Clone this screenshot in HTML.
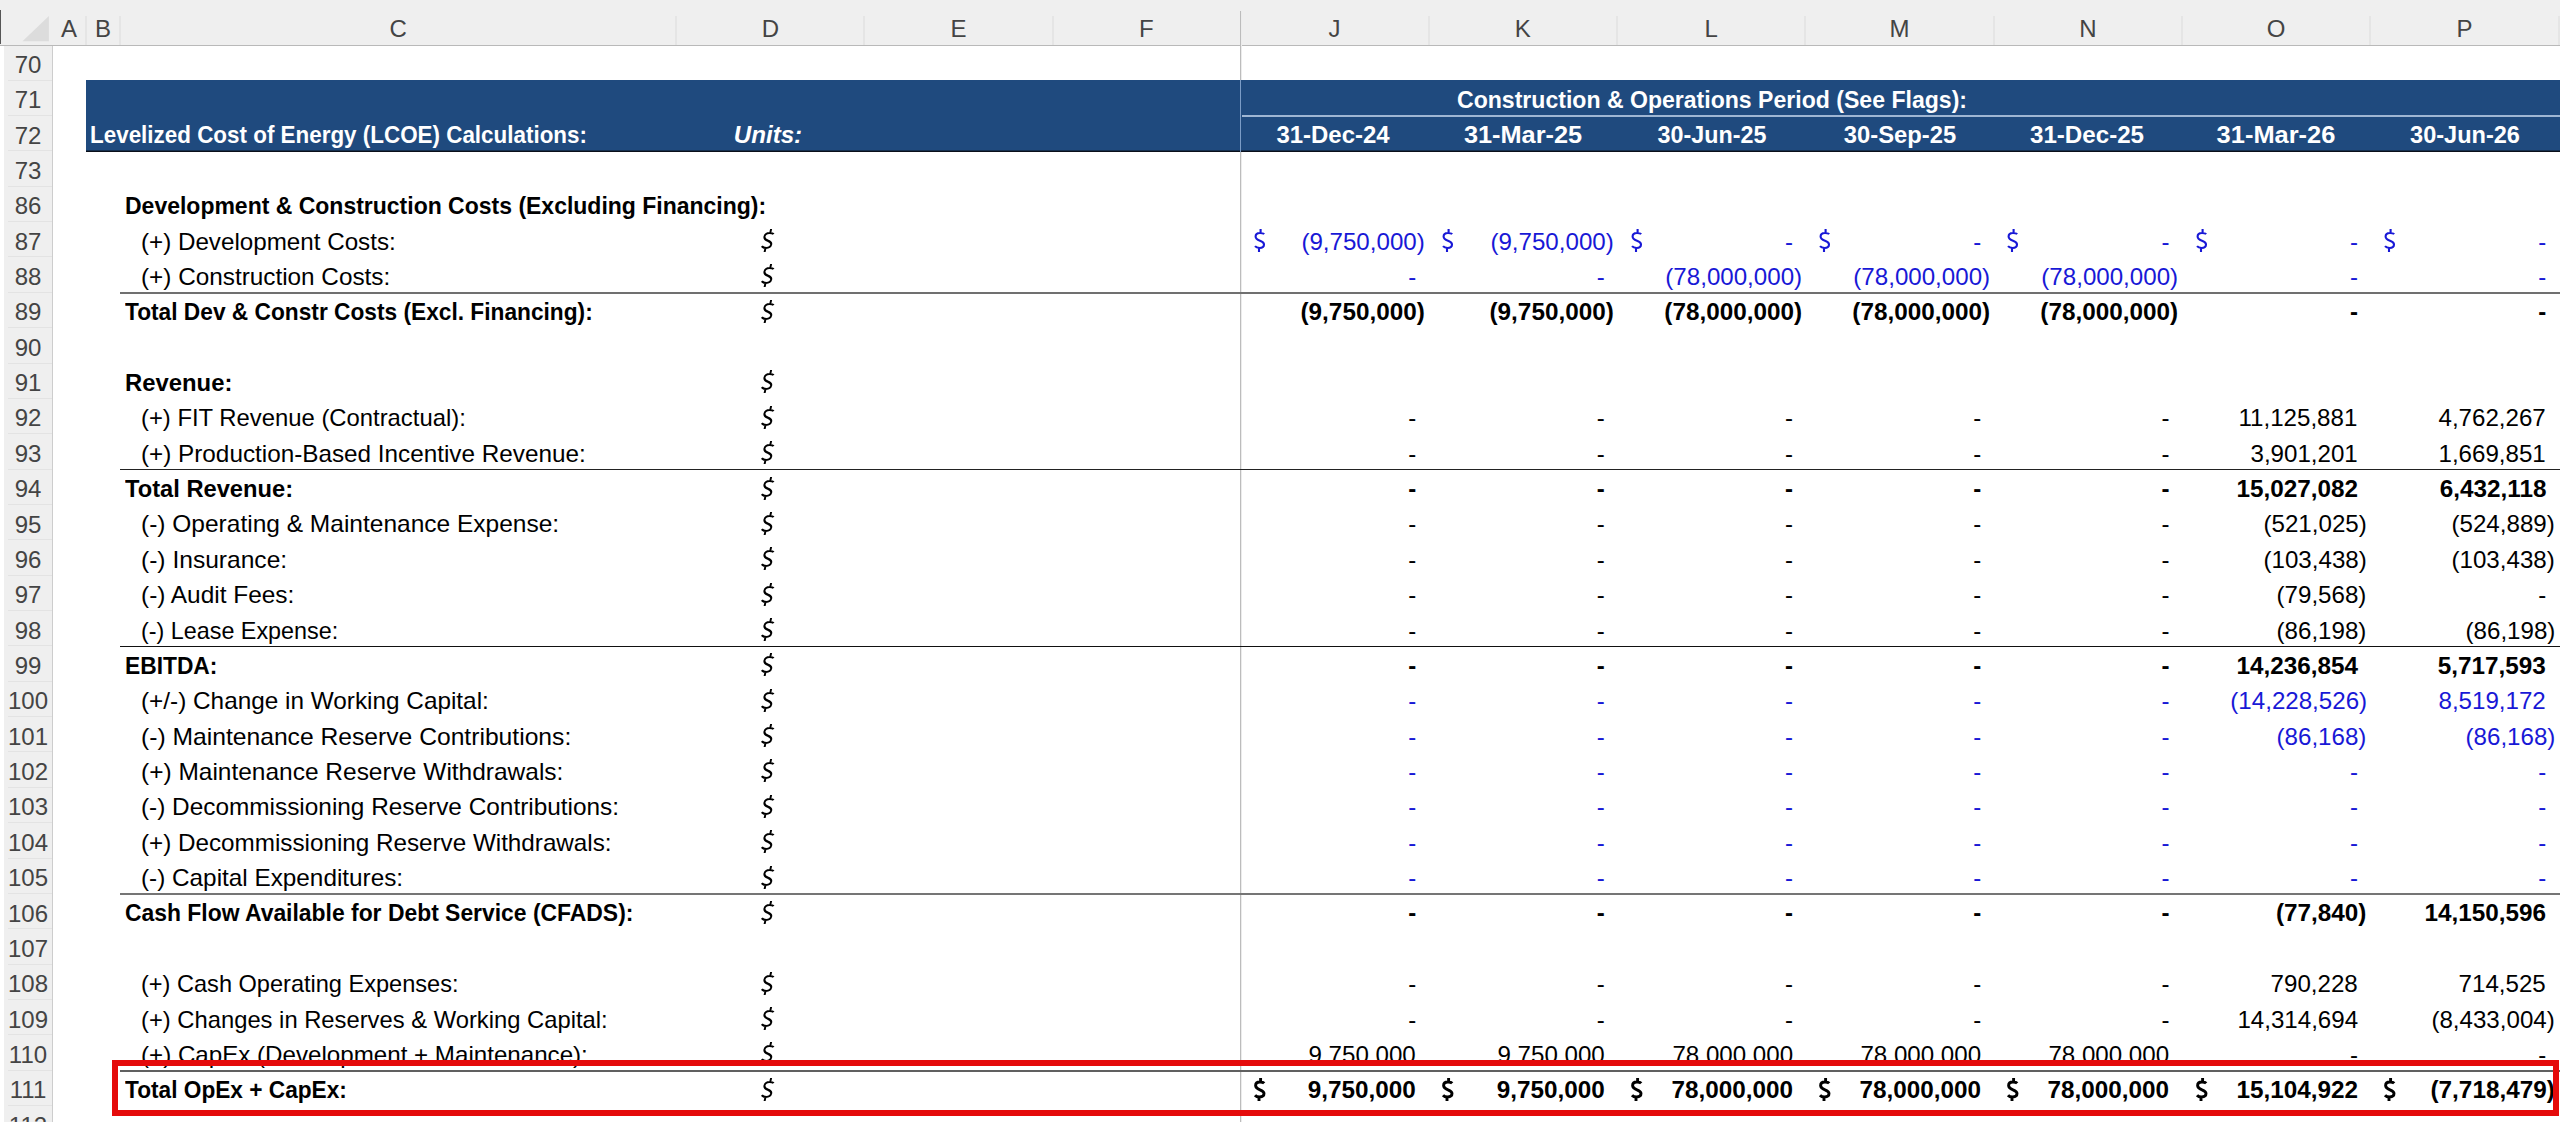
<!DOCTYPE html>
<html><head><meta charset="utf-8"><style>
html,body{margin:0;padding:0}
body{width:2560px;height:1122px;overflow:hidden;background:#fff;position:relative;font-family:"Liberation Sans",sans-serif;}
div{position:absolute}
.t{white-space:pre;line-height:30px;height:30px;font-size:24px}
.b{font-weight:bold}
.i{font-style:italic}
.bl{color:#1818d6}
.wh{color:#fff}
.hd{color:#444}
</style></head><body>
<svg width="0" height="0" style="position:absolute;left:0;top:0"><defs><g id="dS"><path d="M10.2,5.2 C9.2,4 7.7,4.05 5.8,4.05 C3.2,4.05 1.6,5.4 1.6,7.6 C1.6,10.2 3.8,11 6,11.8 C8.6,12.7 10,13.6 10,15.6 C10,17.8 8.2,18.95 5.6,18.95 C3.6,18.95 2,18.4 1,17.2 M6.6,0 L6.6,4.05 M5,18.95 L5,23" fill="none" stroke="currentColor"/></g></defs></svg>

<div style="left:0;top:0;width:2560px;height:45px;background:#efefef"></div>
<div style="left:0;top:45px;width:2560px;height:1px;background:#b9b9b9"></div>
<div style="left:4px;top:46px;width:48px;height:1076px;background:#efefef"></div>
<div style="left:52px;top:46px;width:1px;height:1076px;background:#cdcdcd"></div>
<div style="left:0;top:10px;width:1px;height:34px;background:#555"></div>
<svg style="position:absolute;left:0;top:0" width="60" height="45"><polygon points="22.5,41.2 48.9,16 48.9,41.2" fill="#dcdcdc"/></svg>
<div style="left:85px;top:16px;width:2px;height:29px;background:#e5e5e5"></div>
<div style="left:119px;top:16px;width:2px;height:29px;background:#e5e5e5"></div>
<div style="left:675px;top:16px;width:2px;height:29px;background:#e5e5e5"></div>
<div style="left:863px;top:16px;width:2px;height:29px;background:#e5e5e5"></div>
<div style="left:1052px;top:16px;width:2px;height:29px;background:#e5e5e5"></div>
<div style="left:1428px;top:16px;width:2px;height:29px;background:#e5e5e5"></div>
<div style="left:1616px;top:16px;width:2px;height:29px;background:#e5e5e5"></div>
<div style="left:1804px;top:16px;width:2px;height:29px;background:#e5e5e5"></div>
<div style="left:1993px;top:16px;width:2px;height:29px;background:#e5e5e5"></div>
<div style="left:2181px;top:16px;width:2px;height:29px;background:#e5e5e5"></div>
<div style="left:2369px;top:16px;width:2px;height:29px;background:#e5e5e5"></div>
<div style="left:2558px;top:16px;width:2px;height:29px;background:#e5e5e5"></div>
<div class="t hd" style="left:19.0px;width:100px;text-align:center;top:13.7px">A</div>
<div class="t hd" style="left:53.0px;width:100px;text-align:center;top:13.7px">B</div>
<div class="t hd" style="left:348.2px;width:100px;text-align:center;top:13.7px">C</div>
<div class="t hd" style="left:720.5px;width:100px;text-align:center;top:13.7px">D</div>
<div class="t hd" style="left:908.5px;width:100px;text-align:center;top:13.7px">E</div>
<div class="t hd" style="left:1096.4px;width:100px;text-align:center;top:13.7px">F</div>
<div class="t hd" style="left:1284.5px;width:100px;text-align:center;top:13.7px">J</div>
<div class="t hd" style="left:1472.8px;width:100px;text-align:center;top:13.7px">K</div>
<div class="t hd" style="left:1661.1px;width:100px;text-align:center;top:13.7px">L</div>
<div class="t hd" style="left:1849.5px;width:100px;text-align:center;top:13.7px">M</div>
<div class="t hd" style="left:2037.8px;width:100px;text-align:center;top:13.7px">N</div>
<div class="t hd" style="left:2226.1px;width:100px;text-align:center;top:13.7px">O</div>
<div class="t hd" style="left:2414.4px;width:100px;text-align:center;top:13.7px">P</div>
<div style="left:8px;top:80px;width:44px;height:1px;background:#e3e3e3"></div>
<div class="t hd" style="left:3px;width:50px;text-align:center;top:49.8px">70</div>
<div style="left:8px;top:115px;width:44px;height:1px;background:#e3e3e3"></div>
<div class="t hd" style="left:3px;width:50px;text-align:center;top:85.2px">71</div>
<div style="left:8px;top:150px;width:44px;height:1px;background:#e3e3e3"></div>
<div class="t hd" style="left:3px;width:50px;text-align:center;top:120.6px">72</div>
<div style="left:8px;top:186px;width:44px;height:1px;background:#e3e3e3"></div>
<div class="t hd" style="left:3px;width:50px;text-align:center;top:155.9px">73</div>
<div style="left:8px;top:221px;width:44px;height:1px;background:#e3e3e3"></div>
<div class="t hd" style="left:3px;width:50px;text-align:center;top:191.3px">86</div>
<div style="left:8px;top:256px;width:44px;height:1px;background:#e3e3e3"></div>
<div class="t hd" style="left:3px;width:50px;text-align:center;top:226.6px">87</div>
<div style="left:8px;top:292px;width:44px;height:1px;background:#e3e3e3"></div>
<div class="t hd" style="left:3px;width:50px;text-align:center;top:262.0px">88</div>
<div style="left:8px;top:327px;width:44px;height:1px;background:#e3e3e3"></div>
<div class="t hd" style="left:3px;width:50px;text-align:center;top:297.4px">89</div>
<div style="left:8px;top:363px;width:44px;height:1px;background:#e3e3e3"></div>
<div class="t hd" style="left:3px;width:50px;text-align:center;top:332.7px">90</div>
<div style="left:8px;top:398px;width:44px;height:1px;background:#e3e3e3"></div>
<div class="t hd" style="left:3px;width:50px;text-align:center;top:368.1px">91</div>
<div style="left:8px;top:433px;width:44px;height:1px;background:#e3e3e3"></div>
<div class="t hd" style="left:3px;width:50px;text-align:center;top:403.4px">92</div>
<div style="left:8px;top:469px;width:44px;height:1px;background:#e3e3e3"></div>
<div class="t hd" style="left:3px;width:50px;text-align:center;top:438.8px">93</div>
<div style="left:8px;top:504px;width:44px;height:1px;background:#e3e3e3"></div>
<div class="t hd" style="left:3px;width:50px;text-align:center;top:474.2px">94</div>
<div style="left:8px;top:539px;width:44px;height:1px;background:#e3e3e3"></div>
<div class="t hd" style="left:3px;width:50px;text-align:center;top:509.5px">95</div>
<div style="left:8px;top:575px;width:44px;height:1px;background:#e3e3e3"></div>
<div class="t hd" style="left:3px;width:50px;text-align:center;top:544.9px">96</div>
<div style="left:8px;top:610px;width:44px;height:1px;background:#e3e3e3"></div>
<div class="t hd" style="left:3px;width:50px;text-align:center;top:580.2px">97</div>
<div style="left:8px;top:645px;width:44px;height:1px;background:#e3e3e3"></div>
<div class="t hd" style="left:3px;width:50px;text-align:center;top:615.6px">98</div>
<div style="left:8px;top:681px;width:44px;height:1px;background:#e3e3e3"></div>
<div class="t hd" style="left:3px;width:50px;text-align:center;top:651.0px">99</div>
<div style="left:8px;top:716px;width:44px;height:1px;background:#e3e3e3"></div>
<div class="t hd" style="left:3px;width:50px;text-align:center;top:686.3px">100</div>
<div style="left:8px;top:751px;width:44px;height:1px;background:#e3e3e3"></div>
<div class="t hd" style="left:3px;width:50px;text-align:center;top:721.7px">101</div>
<div style="left:8px;top:787px;width:44px;height:1px;background:#e3e3e3"></div>
<div class="t hd" style="left:3px;width:50px;text-align:center;top:757.0px">102</div>
<div style="left:8px;top:822px;width:44px;height:1px;background:#e3e3e3"></div>
<div class="t hd" style="left:3px;width:50px;text-align:center;top:792.4px">103</div>
<div style="left:8px;top:858px;width:44px;height:1px;background:#e3e3e3"></div>
<div class="t hd" style="left:3px;width:50px;text-align:center;top:827.8px">104</div>
<div style="left:8px;top:893px;width:44px;height:1px;background:#e3e3e3"></div>
<div class="t hd" style="left:3px;width:50px;text-align:center;top:863.1px">105</div>
<div style="left:8px;top:928px;width:44px;height:1px;background:#e3e3e3"></div>
<div class="t hd" style="left:3px;width:50px;text-align:center;top:898.5px">106</div>
<div style="left:8px;top:964px;width:44px;height:1px;background:#e3e3e3"></div>
<div class="t hd" style="left:3px;width:50px;text-align:center;top:933.8px">107</div>
<div style="left:8px;top:999px;width:44px;height:1px;background:#e3e3e3"></div>
<div class="t hd" style="left:3px;width:50px;text-align:center;top:969.2px">108</div>
<div style="left:8px;top:1034px;width:44px;height:1px;background:#e3e3e3"></div>
<div class="t hd" style="left:3px;width:50px;text-align:center;top:1004.6px">109</div>
<div style="left:8px;top:1070px;width:44px;height:1px;background:#e3e3e3"></div>
<div class="t hd" style="left:3px;width:50px;text-align:center;top:1039.9px">110</div>
<div style="left:8px;top:1105px;width:44px;height:1px;background:#e3e3e3"></div>
<div class="t hd" style="left:3px;width:50px;text-align:center;top:1075.3px">111</div>
<div style="left:8px;top:1140px;width:44px;height:1px;background:#e3e3e3"></div>
<div class="t hd" style="left:3px;width:50px;text-align:center;top:1110.6px">112</div>
<div style="left:86px;top:80px;width:2474px;height:71px;background:#1f4a7e"></div>
<div style="left:86px;top:150px;width:2474px;height:1px;background:#16304f"></div><div style="left:86px;top:151px;width:2474px;height:1px;background:#0a0f1a"></div>
<div style="left:1242px;top:115px;width:1318px;height:2px;background:#9fb6d3"></div>
<div style="left:1240px;top:11px;width:1px;height:69px;background:#bcbcbc"></div>
<div style="left:1241px;top:11px;width:1px;height:69px;background:#ececec"></div>
<div style="left:1240px;top:80px;width:1px;height:72px;background:#7b9cc6"></div>
<div style="left:1240px;top:152px;width:1px;height:970px;background:#bcbcbc"></div>
<div style="left:1241px;top:152px;width:1px;height:970px;background:#ececec"></div>
<div style="left:120px;top:292px;width:2440px;height:2px;background:#707070"></div>
<div style="left:120px;top:469px;width:2440px;height:1px;background:#222"></div>
<div style="left:120px;top:646px;width:2440px;height:1px;background:#111"></div>
<div style="left:120px;top:893px;width:2440px;height:2px;background:#757575"></div>
<div style="left:120px;top:1070px;width:2440px;height:2px;background:#606060"></div>
<div class="t b wh" style="top:120.0px;left:90.2px;transform:scaleX(0.9340);transform-origin:0 0;">Levelized Cost of Energy (LCOE) Calculations:</div>
<div class="t b i wh" style="top:120.0px;left:467.6px;width:600px;text-align:center;transform:scaleX(1.0045);">Units:</div>
<div class="t b wh" style="top:85.1px;left:1261.5px;width:900px;text-align:center;transform:scaleX(0.9610);">Construction &amp; Operations Period (See Flags):</div>
<div class="t b wh" style="top:120.2px;left:1243.4px;width:180px;text-align:center;transform:scaleX(0.9966);">31-Dec-24</div>
<div class="t b wh" style="top:120.2px;left:1432.8px;width:180px;text-align:center;transform:scaleX(1.0550);">31-Mar-25</div>
<div class="t b wh" style="top:120.2px;left:1621.7px;width:180px;text-align:center;transform:scaleX(0.9710);">30-Jun-25</div>
<div class="t b wh" style="top:120.2px;left:1809.5px;width:180px;text-align:center;transform:scaleX(0.9900);">30-Sep-25</div>
<div class="t b wh" style="top:120.2px;left:1996.9px;width:180px;text-align:center;transform:scaleX(1.0060);">31-Dec-25</div>
<div class="t b wh" style="top:120.2px;left:2186.1px;width:180px;text-align:center;transform:scaleX(1.0600);">31-Mar-26</div>
<div class="t b wh" style="top:120.2px;left:2375.1px;width:180px;text-align:center;transform:scaleX(0.9800);">30-Jun-26</div>
<div class="t b" style="top:191.2px;left:124.5px;transform:scaleX(0.9578);transform-origin:0 0;">Development &amp; Construction Costs (Excluding Financing):</div>
<div class="t " style="top:226.5px;left:140.8px;transform:scaleX(1.0077);transform-origin:0 0;">(+) Development Costs:</div>
<div class="t " style="top:261.9px;left:140.8px;transform:scaleX(1.0128);transform-origin:0 0;">(+) Construction Costs:</div>
<div class="t b" style="top:297.3px;left:124.5px;transform:scaleX(0.9463);transform-origin:0 0;">Total Dev &amp; Constr Costs (Excl. Financing):</div>
<div class="t b" style="top:368.0px;left:124.5px;transform:scaleX(0.9936);transform-origin:0 0;">Revenue:</div>
<div class="t " style="top:403.3px;left:140.8px;transform:scaleX(0.9931);transform-origin:0 0;">(+) FIT Revenue (Contractual):</div>
<div class="t " style="top:438.7px;left:140.8px;transform:scaleX(1.0116);transform-origin:0 0;">(+) Production-Based Incentive Revenue:</div>
<div class="t b" style="top:474.1px;left:124.5px;transform:scaleX(0.9871);transform-origin:0 0;">Total Revenue:</div>
<div class="t " style="top:509.4px;left:140.8px;transform:scaleX(1.0209);transform-origin:0 0;">(-) Operating &amp; Maintenance Expense:</div>
<div class="t " style="top:544.8px;left:140.8px;transform:scaleX(1.0240);transform-origin:0 0;">(-) Insurance:</div>
<div class="t " style="top:580.1px;left:140.8px;transform:scaleX(1.0173);transform-origin:0 0;">(-) Audit Fees:</div>
<div class="t " style="top:615.5px;left:140.8px;transform:scaleX(0.9724);transform-origin:0 0;">(-) Lease Expense:</div>
<div class="t b" style="top:650.9px;left:124.5px;transform:scaleX(0.9490);transform-origin:0 0;">EBITDA:</div>
<div class="t " style="top:686.2px;left:140.8px;transform:scaleX(1.0139);transform-origin:0 0;">(+/-) Change in Working Capital:</div>
<div class="t " style="top:721.6px;left:140.8px;transform:scaleX(1.0272);transform-origin:0 0;">(-) Maintenance Reserve Contributions:</div>
<div class="t " style="top:756.9px;left:140.8px;transform:scaleX(1.0198);transform-origin:0 0;">(+) Maintenance Reserve Withdrawals:</div>
<div class="t " style="top:792.3px;left:140.8px;transform:scaleX(1.0153);transform-origin:0 0;">(-) Decommissioning Reserve Contributions:</div>
<div class="t " style="top:827.7px;left:140.8px;transform:scaleX(1.0095);transform-origin:0 0;">(+) Decommissioning Reserve Withdrawals:</div>
<div class="t " style="top:863.0px;left:140.8px;transform:scaleX(1.0128);transform-origin:0 0;">(-) Capital Expenditures:</div>
<div class="t b" style="top:898.4px;left:124.5px;transform:scaleX(0.9538);transform-origin:0 0;">Cash Flow Available for Debt Service (CFADS):</div>
<div class="t " style="top:969.1px;left:140.8px;transform:scaleX(0.9815);transform-origin:0 0;">(+) Cash Operating Expenses:</div>
<div class="t " style="top:1004.5px;left:140.8px;transform:scaleX(0.9906);transform-origin:0 0;">(+) Changes in Reserves &amp; Working Capital:</div>
<div class="t " style="top:1039.8px;left:140.8px;transform:scaleX(1.0059);transform-origin:0 0;">(+) CapEx (Development + Maintenance):</div>
<div class="t b" style="top:1075.2px;left:124.5px;transform:scaleX(0.9444);transform-origin:0 0;">Total OpEx + CapEx:</div>
<svg style="position:absolute;left:759.4px;top:228.0px;color:#000" width="22" height="26"><g transform="translate(5.5,1) skewX(-12)"><use href="#dS" stroke-width="2.0"/></g></svg>
<svg style="position:absolute;left:759.4px;top:263.4px;color:#000" width="22" height="26"><g transform="translate(5.5,1) skewX(-12)"><use href="#dS" stroke-width="2.0"/></g></svg>
<svg style="position:absolute;left:759.4px;top:298.7px;color:#000" width="22" height="26"><g transform="translate(5.5,1) skewX(-12)"><use href="#dS" stroke-width="2.0"/></g></svg>
<svg style="position:absolute;left:759.4px;top:369.4px;color:#000" width="22" height="26"><g transform="translate(5.5,1) skewX(-12)"><use href="#dS" stroke-width="2.0"/></g></svg>
<svg style="position:absolute;left:759.4px;top:404.8px;color:#000" width="22" height="26"><g transform="translate(5.5,1) skewX(-12)"><use href="#dS" stroke-width="2.0"/></g></svg>
<svg style="position:absolute;left:759.4px;top:440.2px;color:#000" width="22" height="26"><g transform="translate(5.5,1) skewX(-12)"><use href="#dS" stroke-width="2.0"/></g></svg>
<svg style="position:absolute;left:759.4px;top:475.5px;color:#000" width="22" height="26"><g transform="translate(5.5,1) skewX(-12)"><use href="#dS" stroke-width="2.0"/></g></svg>
<svg style="position:absolute;left:759.4px;top:510.9px;color:#000" width="22" height="26"><g transform="translate(5.5,1) skewX(-12)"><use href="#dS" stroke-width="2.0"/></g></svg>
<svg style="position:absolute;left:759.4px;top:546.2px;color:#000" width="22" height="26"><g transform="translate(5.5,1) skewX(-12)"><use href="#dS" stroke-width="2.0"/></g></svg>
<svg style="position:absolute;left:759.4px;top:581.6px;color:#000" width="22" height="26"><g transform="translate(5.5,1) skewX(-12)"><use href="#dS" stroke-width="2.0"/></g></svg>
<svg style="position:absolute;left:759.4px;top:617.0px;color:#000" width="22" height="26"><g transform="translate(5.5,1) skewX(-12)"><use href="#dS" stroke-width="2.0"/></g></svg>
<svg style="position:absolute;left:759.4px;top:652.3px;color:#000" width="22" height="26"><g transform="translate(5.5,1) skewX(-12)"><use href="#dS" stroke-width="2.0"/></g></svg>
<svg style="position:absolute;left:759.4px;top:687.7px;color:#000" width="22" height="26"><g transform="translate(5.5,1) skewX(-12)"><use href="#dS" stroke-width="2.0"/></g></svg>
<svg style="position:absolute;left:759.4px;top:723.0px;color:#000" width="22" height="26"><g transform="translate(5.5,1) skewX(-12)"><use href="#dS" stroke-width="2.0"/></g></svg>
<svg style="position:absolute;left:759.4px;top:758.4px;color:#000" width="22" height="26"><g transform="translate(5.5,1) skewX(-12)"><use href="#dS" stroke-width="2.0"/></g></svg>
<svg style="position:absolute;left:759.4px;top:793.8px;color:#000" width="22" height="26"><g transform="translate(5.5,1) skewX(-12)"><use href="#dS" stroke-width="2.0"/></g></svg>
<svg style="position:absolute;left:759.4px;top:829.1px;color:#000" width="22" height="26"><g transform="translate(5.5,1) skewX(-12)"><use href="#dS" stroke-width="2.0"/></g></svg>
<svg style="position:absolute;left:759.4px;top:864.5px;color:#000" width="22" height="26"><g transform="translate(5.5,1) skewX(-12)"><use href="#dS" stroke-width="2.0"/></g></svg>
<svg style="position:absolute;left:759.4px;top:899.8px;color:#000" width="22" height="26"><g transform="translate(5.5,1) skewX(-12)"><use href="#dS" stroke-width="2.0"/></g></svg>
<svg style="position:absolute;left:759.4px;top:970.6px;color:#000" width="22" height="26"><g transform="translate(5.5,1) skewX(-12)"><use href="#dS" stroke-width="2.0"/></g></svg>
<svg style="position:absolute;left:759.4px;top:1005.9px;color:#000" width="22" height="26"><g transform="translate(5.5,1) skewX(-12)"><use href="#dS" stroke-width="2.0"/></g></svg>
<svg style="position:absolute;left:759.4px;top:1041.3px;color:#000" width="22" height="26"><g transform="translate(5.5,1) skewX(-12)"><use href="#dS" stroke-width="2.0"/></g></svg>
<svg style="position:absolute;left:759.4px;top:1076.6px;color:#000" width="22" height="26"><g transform="translate(5.5,1) skewX(-12)"><use href="#dS" stroke-width="2.0"/></g></svg>
<svg style="position:absolute;left:1251.9px;top:228.1px;color:#1818d6" width="18" height="26"><g transform="translate(2,1)"><use href="#dS" stroke-width="2.1"/></g></svg>
<div class="t bl" style="top:226.5px;right:1134.9px;transform:scaleX(1.0050);transform-origin:100% 0;">(9,750,000)</div>
<svg style="position:absolute;left:1440.2px;top:228.1px;color:#1818d6" width="18" height="26"><g transform="translate(2,1)"><use href="#dS" stroke-width="2.1"/></g></svg>
<div class="t bl" style="top:226.5px;right:946.5px;transform:scaleX(1.0050);transform-origin:100% 0;">(9,750,000)</div>
<svg style="position:absolute;left:1628.6px;top:228.1px;color:#1818d6" width="18" height="26"><g transform="translate(2,1)"><use href="#dS" stroke-width="2.1"/></g></svg>
<div class="t bl" style="top:226.5px;right:767.0px;">-</div>
<svg style="position:absolute;left:1816.9px;top:228.1px;color:#1818d6" width="18" height="26"><g transform="translate(2,1)"><use href="#dS" stroke-width="2.1"/></g></svg>
<div class="t bl" style="top:226.5px;right:578.7px;">-</div>
<svg style="position:absolute;left:2005.2px;top:228.1px;color:#1818d6" width="18" height="26"><g transform="translate(2,1)"><use href="#dS" stroke-width="2.1"/></g></svg>
<div class="t bl" style="top:226.5px;right:390.4px;">-</div>
<svg style="position:absolute;left:2193.5px;top:228.1px;color:#1818d6" width="18" height="26"><g transform="translate(2,1)"><use href="#dS" stroke-width="2.1"/></g></svg>
<div class="t bl" style="top:226.5px;right:202.0px;">-</div>
<svg style="position:absolute;left:2381.9px;top:228.1px;color:#1818d6" width="18" height="26"><g transform="translate(2,1)"><use href="#dS" stroke-width="2.1"/></g></svg>
<div class="t bl" style="top:226.5px;right:13.7px;">-</div>
<div class="t bl" style="top:261.9px;right:1143.7px;">-</div>
<div class="t bl" style="top:261.9px;right:955.3px;">-</div>
<div class="t bl" style="top:261.9px;right:758.2px;transform:scaleX(1.0050);transform-origin:100% 0;">(78,000,000)</div>
<div class="t bl" style="top:261.9px;right:569.9px;transform:scaleX(1.0050);transform-origin:100% 0;">(78,000,000)</div>
<div class="t bl" style="top:261.9px;right:381.6px;transform:scaleX(1.0050);transform-origin:100% 0;">(78,000,000)</div>
<div class="t bl" style="top:261.9px;right:202.0px;">-</div>
<div class="t bl" style="top:261.9px;right:13.7px;">-</div>
<div class="t b " style="top:297.3px;right:1134.9px;transform:scaleX(1.0120);transform-origin:100% 0;">(9,750,000)</div>
<div class="t b " style="top:297.3px;right:946.5px;transform:scaleX(1.0120);transform-origin:100% 0;">(9,750,000)</div>
<div class="t b " style="top:297.3px;right:758.2px;transform:scaleX(1.0120);transform-origin:100% 0;">(78,000,000)</div>
<div class="t b " style="top:297.3px;right:569.9px;transform:scaleX(1.0120);transform-origin:100% 0;">(78,000,000)</div>
<div class="t b " style="top:297.3px;right:381.6px;transform:scaleX(1.0120);transform-origin:100% 0;">(78,000,000)</div>
<div class="t b " style="top:297.3px;right:202.0px;">-</div>
<div class="t b " style="top:297.3px;right:13.7px;">-</div>
<div class="t " style="top:403.3px;right:1143.7px;">-</div>
<div class="t " style="top:403.3px;right:955.3px;">-</div>
<div class="t " style="top:403.3px;right:767.0px;">-</div>
<div class="t " style="top:403.3px;right:578.7px;">-</div>
<div class="t " style="top:403.3px;right:390.4px;">-</div>
<div class="t " style="top:403.3px;right:202.2px;transform:scaleX(1.0050);transform-origin:100% 0;">11,125,881</div>
<div class="t " style="top:403.3px;right:13.9px;transform:scaleX(1.0050);transform-origin:100% 0;">4,762,267</div>
<div class="t " style="top:438.7px;right:1143.7px;">-</div>
<div class="t " style="top:438.7px;right:955.3px;">-</div>
<div class="t " style="top:438.7px;right:767.0px;">-</div>
<div class="t " style="top:438.7px;right:578.7px;">-</div>
<div class="t " style="top:438.7px;right:390.4px;">-</div>
<div class="t " style="top:438.7px;right:202.2px;transform:scaleX(1.0050);transform-origin:100% 0;">3,901,201</div>
<div class="t " style="top:438.7px;right:13.9px;transform:scaleX(1.0050);transform-origin:100% 0;">1,669,851</div>
<div class="t b " style="top:474.1px;right:1143.7px;">-</div>
<div class="t b " style="top:474.1px;right:955.3px;">-</div>
<div class="t b " style="top:474.1px;right:767.0px;">-</div>
<div class="t b " style="top:474.1px;right:578.7px;">-</div>
<div class="t b " style="top:474.1px;right:390.4px;">-</div>
<div class="t b " style="top:474.1px;right:202.2px;transform:scaleX(1.0120);transform-origin:100% 0;">15,027,082</div>
<div class="t b " style="top:474.1px;right:13.9px;transform:scaleX(1.0120);transform-origin:100% 0;">6,432,118</div>
<div class="t " style="top:509.4px;right:1143.7px;">-</div>
<div class="t " style="top:509.4px;right:955.3px;">-</div>
<div class="t " style="top:509.4px;right:767.0px;">-</div>
<div class="t " style="top:509.4px;right:578.7px;">-</div>
<div class="t " style="top:509.4px;right:390.4px;">-</div>
<div class="t " style="top:509.4px;right:193.2px;transform:scaleX(1.0050);transform-origin:100% 0;">(521,025)</div>
<div class="t " style="top:509.4px;right:4.9px;transform:scaleX(1.0050);transform-origin:100% 0;">(524,889)</div>
<div class="t " style="top:544.8px;right:1143.7px;">-</div>
<div class="t " style="top:544.8px;right:955.3px;">-</div>
<div class="t " style="top:544.8px;right:767.0px;">-</div>
<div class="t " style="top:544.8px;right:578.7px;">-</div>
<div class="t " style="top:544.8px;right:390.4px;">-</div>
<div class="t " style="top:544.8px;right:193.2px;transform:scaleX(1.0050);transform-origin:100% 0;">(103,438)</div>
<div class="t " style="top:544.8px;right:4.9px;transform:scaleX(1.0050);transform-origin:100% 0;">(103,438)</div>
<div class="t " style="top:580.1px;right:1143.7px;">-</div>
<div class="t " style="top:580.1px;right:955.3px;">-</div>
<div class="t " style="top:580.1px;right:767.0px;">-</div>
<div class="t " style="top:580.1px;right:578.7px;">-</div>
<div class="t " style="top:580.1px;right:390.4px;">-</div>
<div class="t " style="top:580.1px;right:193.2px;transform:scaleX(1.0050);transform-origin:100% 0;">(79,568)</div>
<div class="t " style="top:580.1px;right:13.7px;">-</div>
<div class="t " style="top:615.5px;right:1143.7px;">-</div>
<div class="t " style="top:615.5px;right:955.3px;">-</div>
<div class="t " style="top:615.5px;right:767.0px;">-</div>
<div class="t " style="top:615.5px;right:578.7px;">-</div>
<div class="t " style="top:615.5px;right:390.4px;">-</div>
<div class="t " style="top:615.5px;right:193.2px;transform:scaleX(1.0050);transform-origin:100% 0;">(86,198)</div>
<div class="t " style="top:615.5px;right:4.9px;transform:scaleX(1.0050);transform-origin:100% 0;">(86,198)</div>
<div class="t b " style="top:650.9px;right:1143.7px;">-</div>
<div class="t b " style="top:650.9px;right:955.3px;">-</div>
<div class="t b " style="top:650.9px;right:767.0px;">-</div>
<div class="t b " style="top:650.9px;right:578.7px;">-</div>
<div class="t b " style="top:650.9px;right:390.4px;">-</div>
<div class="t b " style="top:650.9px;right:202.2px;transform:scaleX(1.0120);transform-origin:100% 0;">14,236,854</div>
<div class="t b " style="top:650.9px;right:13.9px;transform:scaleX(1.0120);transform-origin:100% 0;">5,717,593</div>
<div class="t bl" style="top:686.2px;right:1143.7px;">-</div>
<div class="t bl" style="top:686.2px;right:955.3px;">-</div>
<div class="t bl" style="top:686.2px;right:767.0px;">-</div>
<div class="t bl" style="top:686.2px;right:578.7px;">-</div>
<div class="t bl" style="top:686.2px;right:390.4px;">-</div>
<div class="t bl" style="top:686.2px;right:193.2px;transform:scaleX(1.0050);transform-origin:100% 0;">(14,228,526)</div>
<div class="t bl" style="top:686.2px;right:13.9px;transform:scaleX(1.0050);transform-origin:100% 0;">8,519,172</div>
<div class="t bl" style="top:721.6px;right:1143.7px;">-</div>
<div class="t bl" style="top:721.6px;right:955.3px;">-</div>
<div class="t bl" style="top:721.6px;right:767.0px;">-</div>
<div class="t bl" style="top:721.6px;right:578.7px;">-</div>
<div class="t bl" style="top:721.6px;right:390.4px;">-</div>
<div class="t bl" style="top:721.6px;right:193.2px;transform:scaleX(1.0050);transform-origin:100% 0;">(86,168)</div>
<div class="t bl" style="top:721.6px;right:4.9px;transform:scaleX(1.0050);transform-origin:100% 0;">(86,168)</div>
<div class="t bl" style="top:756.9px;right:1143.7px;">-</div>
<div class="t bl" style="top:756.9px;right:955.3px;">-</div>
<div class="t bl" style="top:756.9px;right:767.0px;">-</div>
<div class="t bl" style="top:756.9px;right:578.7px;">-</div>
<div class="t bl" style="top:756.9px;right:390.4px;">-</div>
<div class="t bl" style="top:756.9px;right:202.0px;">-</div>
<div class="t bl" style="top:756.9px;right:13.7px;">-</div>
<div class="t bl" style="top:792.3px;right:1143.7px;">-</div>
<div class="t bl" style="top:792.3px;right:955.3px;">-</div>
<div class="t bl" style="top:792.3px;right:767.0px;">-</div>
<div class="t bl" style="top:792.3px;right:578.7px;">-</div>
<div class="t bl" style="top:792.3px;right:390.4px;">-</div>
<div class="t bl" style="top:792.3px;right:202.0px;">-</div>
<div class="t bl" style="top:792.3px;right:13.7px;">-</div>
<div class="t bl" style="top:827.7px;right:1143.7px;">-</div>
<div class="t bl" style="top:827.7px;right:955.3px;">-</div>
<div class="t bl" style="top:827.7px;right:767.0px;">-</div>
<div class="t bl" style="top:827.7px;right:578.7px;">-</div>
<div class="t bl" style="top:827.7px;right:390.4px;">-</div>
<div class="t bl" style="top:827.7px;right:202.0px;">-</div>
<div class="t bl" style="top:827.7px;right:13.7px;">-</div>
<div class="t bl" style="top:863.0px;right:1143.7px;">-</div>
<div class="t bl" style="top:863.0px;right:955.3px;">-</div>
<div class="t bl" style="top:863.0px;right:767.0px;">-</div>
<div class="t bl" style="top:863.0px;right:578.7px;">-</div>
<div class="t bl" style="top:863.0px;right:390.4px;">-</div>
<div class="t bl" style="top:863.0px;right:202.0px;">-</div>
<div class="t bl" style="top:863.0px;right:13.7px;">-</div>
<div class="t b " style="top:898.4px;right:1143.7px;">-</div>
<div class="t b " style="top:898.4px;right:955.3px;">-</div>
<div class="t b " style="top:898.4px;right:767.0px;">-</div>
<div class="t b " style="top:898.4px;right:578.7px;">-</div>
<div class="t b " style="top:898.4px;right:390.4px;">-</div>
<div class="t b " style="top:898.4px;right:193.2px;transform:scaleX(1.0120);transform-origin:100% 0;">(77,840)</div>
<div class="t b " style="top:898.4px;right:13.9px;transform:scaleX(1.0120);transform-origin:100% 0;">14,150,596</div>
<div class="t " style="top:969.1px;right:1143.7px;">-</div>
<div class="t " style="top:969.1px;right:955.3px;">-</div>
<div class="t " style="top:969.1px;right:767.0px;">-</div>
<div class="t " style="top:969.1px;right:578.7px;">-</div>
<div class="t " style="top:969.1px;right:390.4px;">-</div>
<div class="t " style="top:969.1px;right:202.2px;transform:scaleX(1.0050);transform-origin:100% 0;">790,228</div>
<div class="t " style="top:969.1px;right:13.9px;transform:scaleX(1.0050);transform-origin:100% 0;">714,525</div>
<div class="t " style="top:1004.5px;right:1143.7px;">-</div>
<div class="t " style="top:1004.5px;right:955.3px;">-</div>
<div class="t " style="top:1004.5px;right:767.0px;">-</div>
<div class="t " style="top:1004.5px;right:578.7px;">-</div>
<div class="t " style="top:1004.5px;right:390.4px;">-</div>
<div class="t " style="top:1004.5px;right:202.2px;transform:scaleX(1.0050);transform-origin:100% 0;">14,314,694</div>
<div class="t " style="top:1004.5px;right:4.9px;transform:scaleX(1.0050);transform-origin:100% 0;">(8,433,004)</div>
<div class="t " style="top:1039.8px;right:1143.9px;transform:scaleX(1.0050);transform-origin:100% 0;">9,750,000</div>
<div class="t " style="top:1039.8px;right:955.5px;transform:scaleX(1.0050);transform-origin:100% 0;">9,750,000</div>
<div class="t " style="top:1039.8px;right:767.2px;transform:scaleX(1.0050);transform-origin:100% 0;">78,000,000</div>
<div class="t " style="top:1039.8px;right:578.9px;transform:scaleX(1.0050);transform-origin:100% 0;">78,000,000</div>
<div class="t " style="top:1039.8px;right:390.6px;transform:scaleX(1.0050);transform-origin:100% 0;">78,000,000</div>
<div class="t " style="top:1039.8px;right:202.0px;">-</div>
<div class="t " style="top:1039.8px;right:13.7px;">-</div>
<svg style="position:absolute;left:1251.9px;top:1076.7px;color:#000" width="18" height="26"><g transform="translate(2,1)"><use href="#dS" stroke-width="2.9"/></g></svg>
<div class="t b " style="top:1075.2px;right:1143.9px;transform:scaleX(1.0120);transform-origin:100% 0;">9,750,000</div>
<svg style="position:absolute;left:1440.2px;top:1076.7px;color:#000" width="18" height="26"><g transform="translate(2,1)"><use href="#dS" stroke-width="2.9"/></g></svg>
<div class="t b " style="top:1075.2px;right:955.5px;transform:scaleX(1.0120);transform-origin:100% 0;">9,750,000</div>
<svg style="position:absolute;left:1628.6px;top:1076.7px;color:#000" width="18" height="26"><g transform="translate(2,1)"><use href="#dS" stroke-width="2.9"/></g></svg>
<div class="t b " style="top:1075.2px;right:767.2px;transform:scaleX(1.0120);transform-origin:100% 0;">78,000,000</div>
<svg style="position:absolute;left:1816.9px;top:1076.7px;color:#000" width="18" height="26"><g transform="translate(2,1)"><use href="#dS" stroke-width="2.9"/></g></svg>
<div class="t b " style="top:1075.2px;right:578.9px;transform:scaleX(1.0120);transform-origin:100% 0;">78,000,000</div>
<svg style="position:absolute;left:2005.2px;top:1076.7px;color:#000" width="18" height="26"><g transform="translate(2,1)"><use href="#dS" stroke-width="2.9"/></g></svg>
<div class="t b " style="top:1075.2px;right:390.6px;transform:scaleX(1.0120);transform-origin:100% 0;">78,000,000</div>
<svg style="position:absolute;left:2193.5px;top:1076.7px;color:#000" width="18" height="26"><g transform="translate(2,1)"><use href="#dS" stroke-width="2.9"/></g></svg>
<div class="t b " style="top:1075.2px;right:202.2px;transform:scaleX(1.0120);transform-origin:100% 0;">15,104,922</div>
<svg style="position:absolute;left:2381.9px;top:1076.7px;color:#000" width="18" height="26"><g transform="translate(2,1)"><use href="#dS" stroke-width="2.9"/></g></svg>
<div class="t b " style="top:1075.2px;right:4.9px;transform:scaleX(1.0120);transform-origin:100% 0;">(7,718,479)</div>
<div style="left:112px;top:1060px;width:2447px;height:56px;box-sizing:border-box;border:6px solid #e50b0b"></div>
</body></html>
